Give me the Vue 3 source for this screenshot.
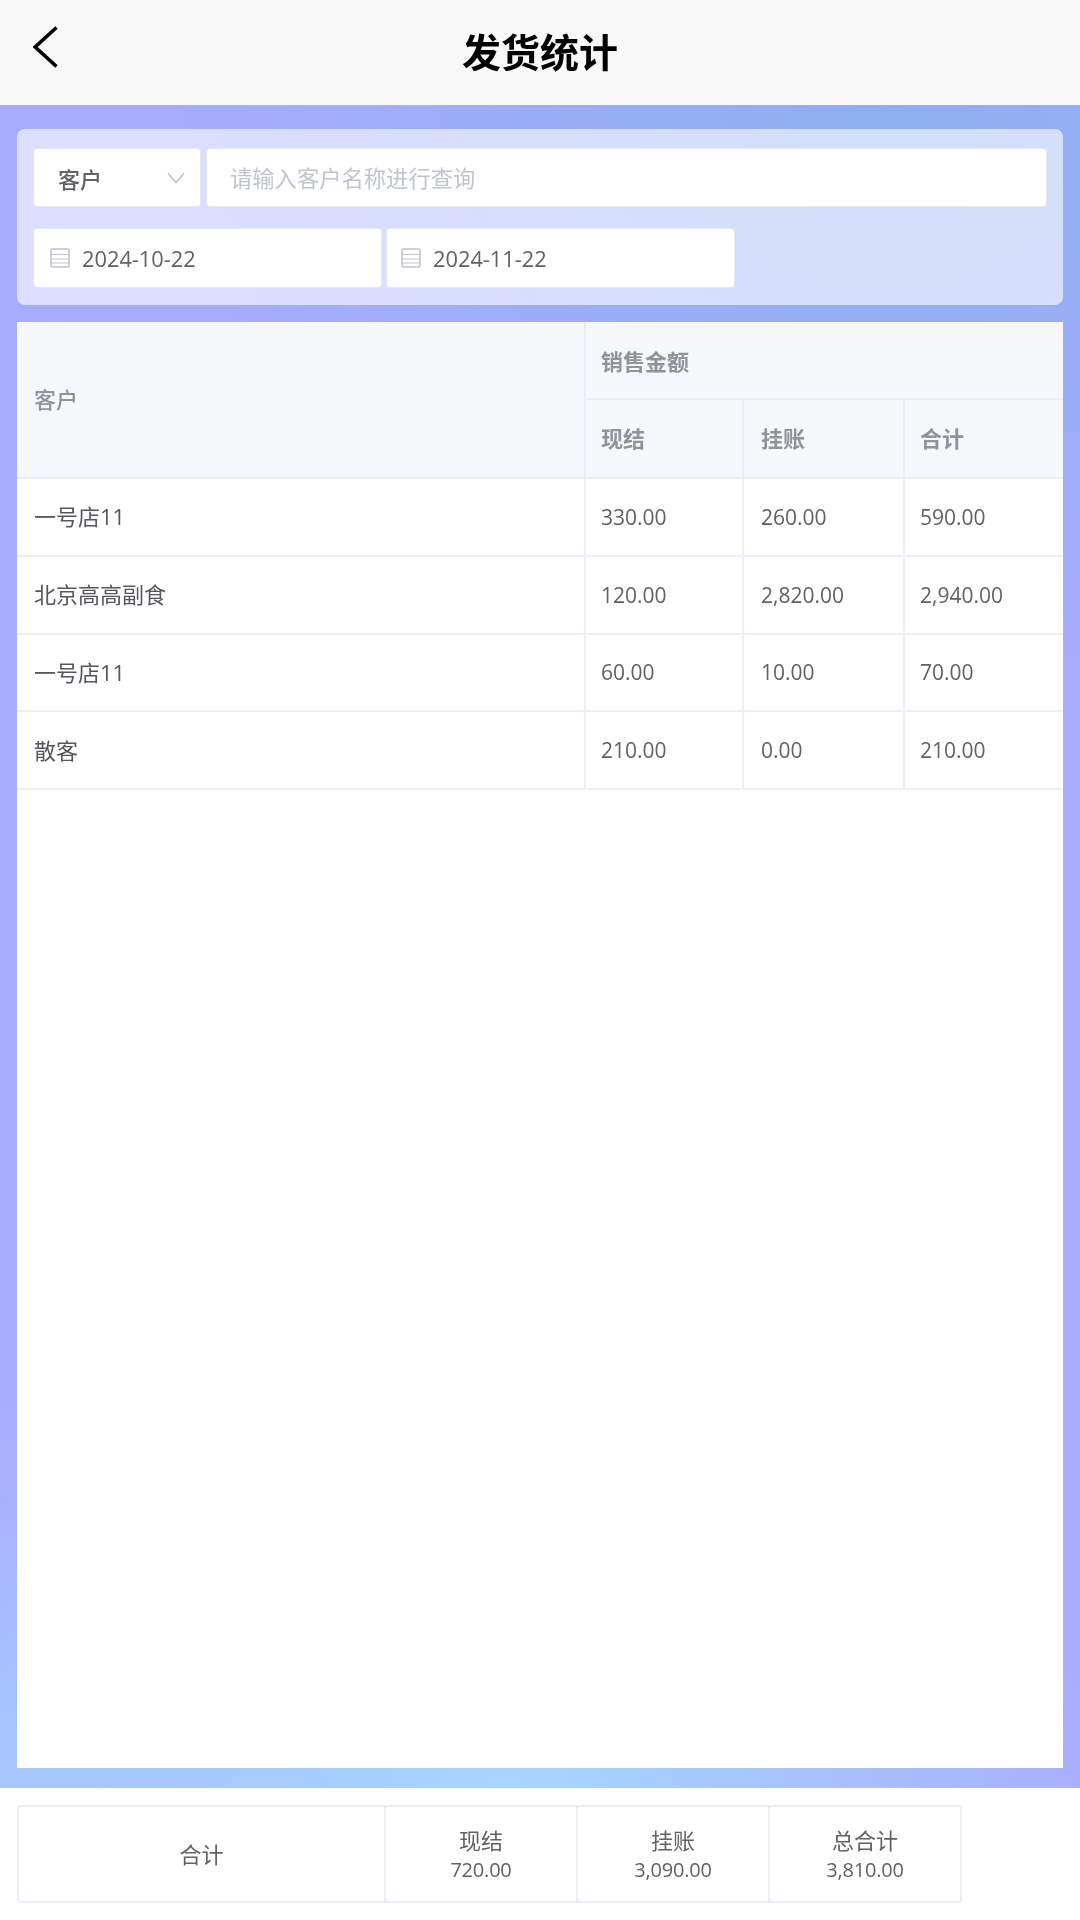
<script setup>
const rows = [
  { name: '一号店11', cash: '330.00', credit: '260.00', total: '590.00' },
  { name: '北京高高副食', cash: '120.00', credit: '2,820.00', total: '2,940.00' },
  { name: '一号店11', cash: '60.00', credit: '10.00', total: '70.00' },
  { name: '散客', cash: '210.00', credit: '0.00', total: '210.00' }
]
const dates = ['2024-10-22', '2024-11-22']
const totals = [
  { label: '现结', value: '720.00' },
  { label: '挂账', value: '3,090.00' },
  { label: '总合计', value: '3,810.00' }
]
</script>

<template>
  <div class="page">
    <header class="bar">
      <svg class="back" width="25" height="42" viewBox="0 0 25 42" fill="none">
        <path d="M23.5 1.5 2.2 21l21.3 19.5" stroke="#000" stroke-width="3.6" />
      </svg>
      <h1>发货统计</h1>
    </header>

    <main class="main">
      <section class="filters">
        <div class="row">
          <div class="select field">
            <span>客户</span>
            <svg width="18" height="12" viewBox="0 0 18 12" fill="none">
              <path d="M1 1.5 9 10.5l8-9" stroke="#c0c4cc" stroke-width="1.6" />
            </svg>
          </div>
          <div class="search field">请输入客户名称进行查询</div>
        </div>
        <div class="row dates">
          <div v-for="d in dates" :key="d" class="date field">
            <svg width="20" height="20" viewBox="0 0 20 20" fill="none" stroke="#c0c4cc" stroke-width="1.6">
              <rect x="1" y="1" width="18" height="18" rx="1.5" />
              <path d="M1 6.5h18M1 11h18M1 15h18" stroke-width="1.2" />
            </svg>
            <span>{{ d }}</span>
          </div>
        </div>
      </section>

      <section class="panel">
        <table class="grid">
          <colgroup>
            <col class="c1" /><col class="c2" /><col class="c3" /><col />
          </colgroup>
          <thead>
            <tr class="h1">
              <th rowspan="2" class="name">客户</th>
              <th colspan="3" class="last">销售金额</th>
            </tr>
            <tr class="h2">
              <th>现结</th><th class="mid">挂账</th><th class="last">合计</th>
            </tr>
          </thead>
          <tbody>
            <tr v-for="(r, i) in rows" :key="i">
              <td class="name">{{ r.name }}</td>
              <td class="num">{{ r.cash }}</td>
              <td class="num mid">{{ r.credit }}</td>
              <td class="num last">{{ r.total }}</td>
            </tr>
          </tbody>
        </table>
      </section>
    </main>

    <footer class="foot">
      <div class="sum">
        <div class="cell first">合计</div>
        <div v-for="t in totals" :key="t.label" class="cell">
          <span>{{ t.label }}</span>
          <span class="val">{{ t.value }}</span>
        </div>
      </div>
    </footer>
  </div>
</template>

<style scoped>
.page {
  width: 1080px;
  height: 1920px;
  display: flex;
  flex-direction: column;
  background: #fff;
  font-family: "Open Sans", "Noto Sans CJK SC", sans-serif;
  font-size: 22px;
  color: #606266;
  overflow: hidden;
  filter: blur(0.4px);
}
.bar {
  position: relative;
  height: 105px;
  flex: none;
  background: #f8f8f8;
  display: flex;
  align-items: center;
  justify-content: center;
}
.bar h1 {
  margin: 0 0 4px;
  font-family: "Noto Sans CJK SC", sans-serif;
  font-size: 39px;
  font-weight: 700;
  line-height: 101px;
  color: #000;
}
.back {
  position: absolute;
  left: 33px;
  top: 26px;
}
.main {
  flex: 1;
  display: flex;
  flex-direction: column;
  gap: 17px;
  padding: 24px 17px 20px;
  background:
    radial-gradient(ellipse 620px 420px at 47% 100%, #a6d6ff 0%, rgba(166, 214, 255, 0) 100%),
    radial-gradient(ellipse 700px 420px at 0% 100%, rgba(168, 200, 255, .8) 0%, rgba(168, 200, 255, 0) 100%),
    radial-gradient(ellipse 760px 620px at 82% 0%, #8dafef 0%, rgba(141, 175, 239, 0) 100%),
    #a8acff;
}
.filters {
  flex: none;
  height: 176px;
  box-sizing: border-box;
  padding: 19px 16px 0;
  border-radius: 8px;
  background: rgba(255, 255, 255, .6);
  display: flex;
  flex-direction: column;
  gap: 21px;
}
.row {
  display: flex;
  gap: 5px;
}
.dates {
  gap: 4px;
}
.field {
  box-sizing: border-box;
  background: #fff;
  border: 1px solid #e6e8ee;
  border-radius: 4px;
  display: flex;
  align-items: center;
}
.select {
  width: 168px;
  height: 59px;
  padding: 0 15px 0 24px;
  justify-content: space-between;
  color: #606266;
  font-weight: 500;
}
.search {
  flex: 1;
  height: 59px;
  padding-left: 23px;
  font-size: 22.3px;
  color: #c0c4cc;
}
.date {
  width: 349px;
  height: 60px;
  padding-left: 16px;
  gap: 12px;
  font-size: 21.8px;
}
.date:last-child {
  padding-left: 14px;
}
.panel {
  flex: 1;
  background: #fff;
}
.grid {
  width: 100%;
  table-layout: fixed;
  border-collapse: separate;
  border-spacing: 0;
}
.c1 { width: 569px; }
.c2 { width: 158px; }
.c3 { width: 161px; }
.grid th,
.grid td {
  box-sizing: border-box;
  padding: 0 15px;
  text-align: left;
  border-right: 2px solid #ebeef5;
  border-bottom: 2px solid #ebeef5;
  font-size: 22px;
}
.grid .name {
  padding-left: 17px;
  padding-bottom: 3px;
  color: #55575c;
}
.grid .mid {
  padding-left: 17px;
}
.grid th {
  background: #f5f7fa;
  color: #909399;
  font-weight: 700;
}
.grid th.name {
  font-weight: 500;
  color: #909399;
}
.grid td.num {
  font-size: 21px;
}
.grid .last {
  border-right: 0;
}
.h1 th { height: 78px; }
.h2 th { height: 79px; padding-bottom: 4px; }
.grid td { height: 77.75px; }
.foot {
  flex: none;
  height: 132px;
  box-sizing: border-box;
  padding: 17px 17px 0;
}
.sum {
  width: 945px;
  height: 98px;
  box-sizing: border-box;
  display: flex;
  border: 2px solid #ebeef5;
  border-radius: 2px;
}
.cell {
  width: 192px;
  flex: none;
  box-sizing: border-box;
  padding-top: 2px;
  border-left: 2px solid #ebeef5;
  display: flex;
  flex-direction: column;
  align-items: center;
  justify-content: center;
  line-height: 29px;
}
.cell.first {
  width: 365px;
  padding-top: 0;
  border-left: 0;
}
.val {
  font-size: 20px;
  letter-spacing: -0.2px;
}
</style>
